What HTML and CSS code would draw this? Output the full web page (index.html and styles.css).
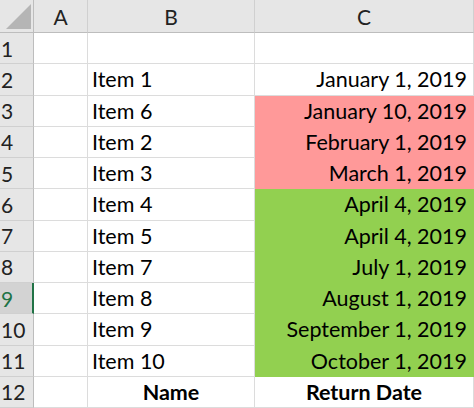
FILE: index.html
```html
<!DOCTYPE html>
<html>
<head>
<meta charset="utf-8">
<link rel="stylesheet" href="styles.css">
</head>
<body>
<div class="sheet">
  <div class="hdr corner"><div class="tri"></div></div>
  <div class="hdr col">A</div>
  <div class="hdr col">B</div>
  <div class="hdr col">C</div>

  <div class="hdr row">1</div><div class="cell"></div><div class="cell"></div><div class="cell"></div>
  <div class="hdr row">2</div><div class="cell"></div><div class="cell txt">Item 1</div><div class="cell num">January 1, 2019</div>
  <div class="hdr row">3</div><div class="cell"></div><div class="cell txt">Item 6</div><div class="cell num red">January 10, 2019</div>
  <div class="hdr row">4</div><div class="cell"></div><div class="cell txt">Item 2</div><div class="cell num red">February 1, 2019</div>
  <div class="hdr row">5</div><div class="cell"></div><div class="cell txt">Item 3</div><div class="cell num red">March 1, 2019</div>
  <div class="hdr row">6</div><div class="cell"></div><div class="cell txt">Item 4</div><div class="cell num green">April 4, 2019</div>
  <div class="hdr row">7</div><div class="cell"></div><div class="cell txt">Item 5</div><div class="cell num green">April 4, 2019</div>
  <div class="hdr row">8</div><div class="cell"></div><div class="cell txt">Item 7</div><div class="cell num green">July 1, 2019</div>
  <div class="hdr row sel">9</div><div class="cell"></div><div class="cell txt">Item 8</div><div class="cell num green">August 1, 2019</div>
  <div class="hdr row">10</div><div class="cell"></div><div class="cell txt">Item 9</div><div class="cell num green">September 1, 2019</div>
  <div class="hdr row">11</div><div class="cell"></div><div class="cell txt">Item 10</div><div class="cell num green">October 1, 2019</div>
  <div class="hdr row">12</div><div class="cell"></div><div class="cell bold">Name</div><div class="cell bold">Return Date</div>
</div>
</body>
</html>
```
FILE: styles.css
```css
html, body {
  margin: 0;
  padding: 0;
  background: #ffffff;
}
.sheet {
  display: grid;
  grid-template-columns: 34px 54px 167px 219px;
  grid-template-rows: 33px repeat(12, 31.25px);
  width: 474px;
  height: 408px;
  overflow: hidden;
  font-family: Lato, "Open Sans", sans-serif;
  font-size: 21.5px;
  color: #000;
}
.hdr {
  background: #e6e6e6;
  color: #222;
  display: flex;
  align-items: center;
  justify-content: center;
  box-sizing: border-box;
  font-size: 21px;
}
.corner {
  border-right: 1px solid #bdbdbd;
  border-bottom: 1px solid #bdbdbd;
  position: relative;
}
.tri {
  position: absolute;
  right: 2px;
  bottom: 3px;
  width: 0;
  height: 0;
  border-left: 25px solid transparent;
  border-bottom: 25px solid #b5b5b5;
}
.col {
  border-right: 1px solid #d0d0d0;
  border-bottom: 1px solid #bdbdbd;
}
.row {
  border-right: 1px solid #bdbdbd;
  border-bottom: 1px solid #d0d0d0;
  justify-content: flex-start;
  padding-left: 1px;
}
.row.sel {
  background: #d3d3d3;
  color: #217346;
  border-right: 2px solid #217346;
}
.cell {
  box-sizing: border-box;
  border-right: 1px solid #dcdcdc;
  border-bottom: 1px solid #dcdcdc;
  display: flex;
  align-items: center;
  white-space: nowrap;
}
.txt {
  padding-left: 4px;
}
.num {
  justify-content: flex-end;
  padding-right: 6px;
}
.bold {
  justify-content: center;
  font-weight: bold;
}
.red {
  background: #ff9999;
  border-color: #ff9999;
}
.green {
  background: #92d050;
  border-color: #92d050;
}
```
